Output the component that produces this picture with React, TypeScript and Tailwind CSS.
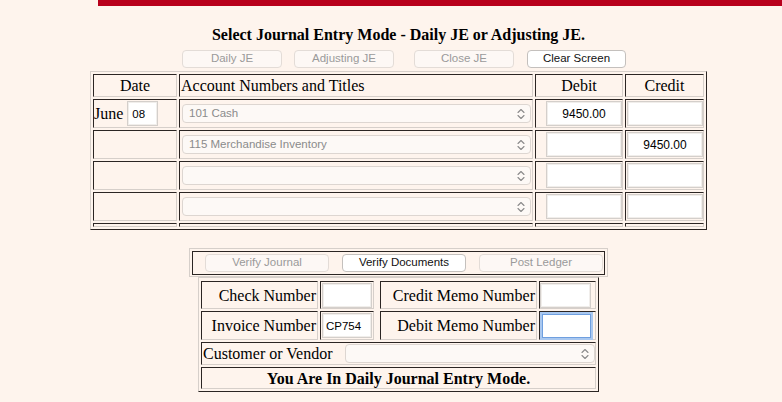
import React from "react";

const cell =
  "border border-t-[#2b2523] border-l-[#2b2523] border-b-[#d6cfca] border-r-[#d6cfca]";
const outer =
  "border border-t-[#d6cfca] border-l-[#d6cfca] border-b-[#2b2523] border-r-[#2b2523]";

function Chevrons() {
  return (
    <svg width="8" height="12" viewBox="0 0 8 12" className="shrink-0">
      <polyline points="1,4.5 4,1.5 7,4.5" fill="none" stroke="#8a8a8a" strokeWidth="1.1" strokeLinecap="round" strokeLinejoin="round" />
      <polyline points="1,7.5 4,10.5 7,7.5" fill="none" stroke="#8a8a8a" strokeWidth="1.1" strokeLinecap="round" strokeLinejoin="round" />
    </svg>
  );
}

function Select({ text, className = "" }: { text?: string; className?: string }) {
  return (
    <div
      className={
        "h-[19px] rounded-[4px] border border-[#ddd6d1] bg-[#fdf9f6] flex items-center pl-[6px] pr-[5px] text-[11.5px] text-[#8b8b8b] font-['Liberation_Sans',sans-serif] " +
        className
      }
    >
      <span className="flex-1 truncate">{text}</span>
      <Chevrons />
    </div>
  );
}

function Field({ value = "", className = "" }: { value?: string; className?: string }) {
  return (
    <input
      readOnly
      value={value}
      className={
        "h-[25px] bg-white border border-[#d4cfcb] shadow-[inset_0_0_0_1px_#f1eeeb] outline-none text-[11.5px] text-black font-['Liberation_Sans',sans-serif] px-[4px] " +
        className
      }
    />
  );
}

function Btn({ label, enabled = false, className = "" }: { label: string; enabled?: boolean; className?: string }) {
  return (
    <div
      className={
        "h-[18px] rounded-[4px] border flex items-center justify-center text-[11.5px] font-['Liberation_Sans',sans-serif] " +
        (enabled
          ? "bg-white border-[#c4c0bd] text-[#111111] "
          : "bg-[#fdf8f5] border-[#e3dcd7] text-[#9a9a9a] ") +
        className
      }
    >
      {label}
    </div>
  );
}

function Row({ date, account, debit, credit }: { date?: boolean; account?: string; debit?: string; credit?: string }) {
  return (
    <>
      <div className={cell + " flex items-center"}>
        {date && (
          <>
            <span>June</span>
            <Field value="08" className="ml-[4px] w-[31px]" />
          </>
        )}
      </div>
      <div className={cell + " flex items-center pl-[2px] pr-[1px]"}>
        <Select text={account} className="w-full" />
      </div>
      <div className={cell + " flex items-center justify-end"}>
        <Field value={debit} className="w-[76px] text-center text-[12px] text-[#333333]" />
      </div>
      <div className={cell + " flex items-center justify-end"}>
        <Field value={credit} className="w-[76px] text-center text-[12px] text-[#333333]" />
      </div>
    </>
  );
}

export default function App() {
  return (
    <div className="w-[782px] h-[402px] overflow-hidden bg-[#fef4ed] font-['Liberation_Serif',serif] text-black text-[16px]">
      <div className="ml-[98px] h-[6px] bg-[#b8001c]" />
      <div className="flex flex-col items-center pl-[15px]">
        <div className="mt-[19px] h-[20px] leading-[20px] font-bold text-[16px]">
          Select Journal Entry Mode - Daily JE or Adjusting JE.
        </div>

        <div className="self-stretch mt-[5px] pl-[167px] flex">
          <Btn label="Daily JE" className="w-[100px]" />
          <Btn label="Adjusting JE" className="w-[100px] ml-[12px]" />
          <Btn label="Close JE" className="w-[100px] ml-[20px]" />
          <Btn label="Clear Screen" enabled className="w-[99px] ml-[13px]" />
        </div>

        <div
          className={
            outer +
            " mt-[3px] p-[2px] grid grid-cols-[84px_354px_88px_79px] grid-rows-[23px_29px_29px_29px_29px_4px] gap-[2px] leading-[19px]"
          }
        >
          <div className={cell + " flex items-center justify-center"}>Date</div>
          <div className={cell + " flex items-center pl-[1px]"}>Account Numbers and Titles</div>
          <div className={cell + " flex items-center justify-center"}>Debit</div>
          <div className={cell + " flex items-center justify-center"}>Credit</div>

          <Row date account="101 Cash" debit="9450.00" />
          <Row account="115 Merchandise Inventory" credit="9450.00" />
          <Row />
          <Row />

          <div className={cell} />
          <div className={cell} />
          <div className={cell} />
          <div className={cell} />
        </div>

        <div className="mt-[18px] w-[419px] border border-[#d6cfca] pt-[2px] pb-[1px] px-[2px]">
          <div className="h-[24px] border border-[#2b2523] flex items-center pl-[12px]">
            <Btn label="Verify Journal" className="w-[124px]" />
            <Btn label="Verify Documents" enabled className="w-[124px] ml-[13px]" />
            <Btn label="Post Ledger" className="w-[124px] ml-[13px]" />
          </div>
        </div>

        <div className={outer + " w-[401px] pt-[3px] pb-[2px] px-[2px] flex flex-col gap-[2px] leading-[19px]"}>
          <div className="flex h-[28px]">
            <div className={cell + " w-[117px] flex items-center justify-end pr-[1px]"}>Check Number</div>
            <div className={cell + " w-[54px] ml-[2px] flex items-center justify-center"}>
              <Field className="w-[50px]" />
            </div>
            <div className={cell + " w-[157px] ml-[6px] flex items-center justify-end pr-[1px]"}>Credit Memo Number</div>
            <div className={cell + " w-[57px] ml-[2px] flex items-center"}>
              <Field className="w-[51px]" />
            </div>
          </div>
          <div className="flex h-[29px]">
            <div className={cell + " w-[117px] flex items-center justify-end pr-[1px]"}>Invoice Number</div>
            <div className={cell + " w-[54px] ml-[2px] flex items-center justify-center"}>
              <Field value="CP754" className="w-[50px] pl-[3px]" />
            </div>
            <div className={cell + " w-[157px] ml-[6px] flex items-center justify-end pr-[1px]"}>Debit Memo Number</div>
            <div className={cell + " w-[57px] ml-[2px] flex items-center pl-[2px]"}>
              <input
                readOnly
                value=""
                className="w-[49px] h-[24px] bg-white border border-[#6f9fdf] shadow-[0_0_0_2px_#a9c8f0] outline-none"
              />
            </div>
          </div>
          <div className={cell + " h-[23px] flex items-center justify-between pl-[1px]"}>
            <span>Customer or Vendor</span>
            <Select className="w-[250px]" />
          </div>
          <div className={cell + " h-[22px] flex items-center justify-center font-bold"}>
            You Are In Daily Journal Entry Mode.
          </div>
        </div>
      </div>
    </div>
  );
}
